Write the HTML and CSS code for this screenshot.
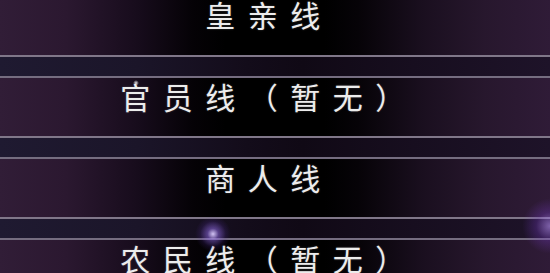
FILE: index.html
```html
<!DOCTYPE html>
<html lang="zh">
<head>
<meta charset="utf-8">
<title>线路选择</title>
<link rel="stylesheet" href="styles.css">
</head>
<body>
<div class="menu">
  <div class="item first"><span class="label">皇亲线</span></div>
  <div class="sep"></div>
  <div class="item"><span class="label">官员线（暂无）</span></div>
  <div class="sep"></div>
  <div class="item"><span class="label">商人线</span></div>
  <div class="sep"></div>
  <div class="item"><span class="label">农民线（暂无）</span></div>
  <div class="glow glow-a"></div>
  <div class="glow glow-b"></div>
  <div class="glow glow-c"></div>
</div>
</body>
</html>
```

FILE: styles.css
```css
html, body {
  margin: 0;
  padding: 0;
  background: #000;
  overflow: hidden;
}

.menu {
  position: relative;
  width: 550px;
  height: 273px;
  overflow: hidden;
  display: flex;
  flex-direction: column;
}

.item {
  flex: none;
  height: 58px;
  display: flex;
  justify-content: center;
  align-items: flex-start;
  padding-right: 12px;
  box-sizing: border-box;
  background: linear-gradient(to right,
    #311d37 0%,
    #2b1830 12%,
    #170c1c 25%,
    #050206 35%,
    #000 41%,
    #000 59%,
    #060307 65%,
    #1a0f1f 77%,
    #27172d 88%,
    #2f1b37 100%);
}

.item.first {
  height: 55px;
}

.item.first .label {
  line-height: 28px;
}

.label {
  display: block;
  font-family: "Noto Sans CJK SC", "Noto Sans", sans-serif;
  font-size: 30px;
  line-height: 36px;
  letter-spacing: 12.5px;
  color: #ececec;
  text-shadow: 0 0 2px rgba(255, 255, 255, 0.25);
}

.sep {
  flex: none;
  height: 19px;
  border-top: 2px solid #807789;
  border-bottom: 2px solid #756d80;
  background: linear-gradient(to right,
    #1f1a31 0%,
    #1b1529 25%,
    #130c1a 45%,
    #100915 55%,
    #170e1f 75%,
    #1e1329 100%);
}

.glow {
  position: absolute;
  border-radius: 50%;
  pointer-events: none;
}

.glow-a {
  left: 195px;
  top: 216px;
  width: 36px;
  height: 36px;
  background: radial-gradient(circle, rgba(220, 205, 255, 0.95) 0%, rgba(150, 110, 240, 0.5) 22%, rgba(90, 50, 170, 0.18) 50%, rgba(60, 30, 120, 0) 70%);
}

.glow-b {
  left: 522px;
  top: 198px;
  width: 56px;
  height: 56px;
  background: radial-gradient(circle, rgba(190, 150, 255, 0.6) 0%, rgba(120, 60, 200, 0.3) 35%, rgba(80, 30, 130, 0) 70%);
}

.glow-c {
  left: 133px;
  top: 80px;
  width: 6px;
  height: 6px;
  background: radial-gradient(circle, rgba(255, 255, 255, 0.9) 0%, rgba(255, 255, 255, 0) 70%);
}
```
